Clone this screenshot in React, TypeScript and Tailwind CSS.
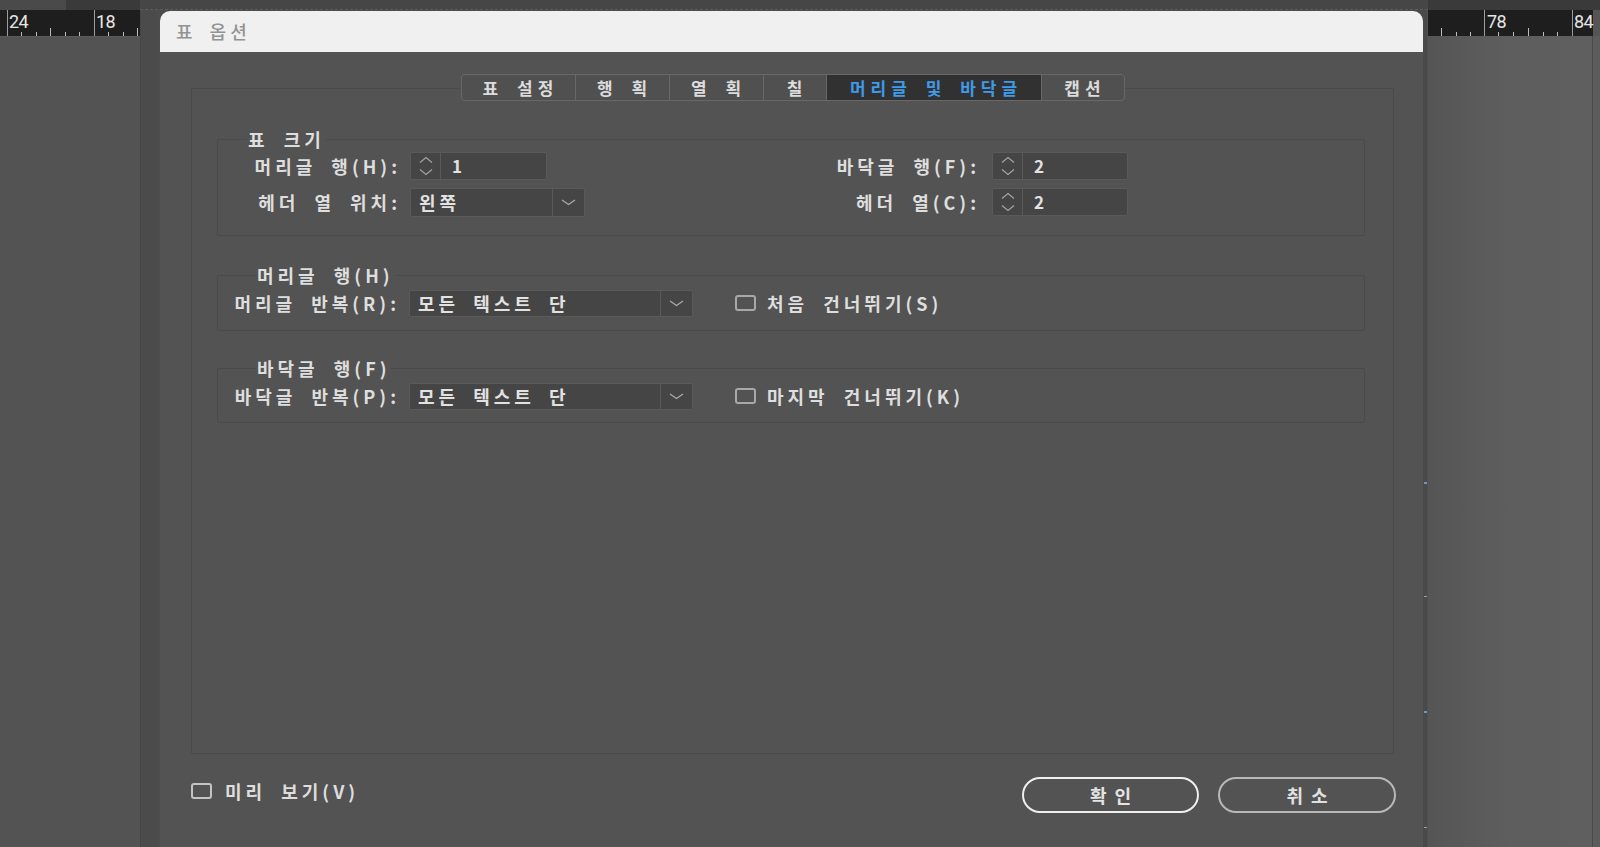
import React from "react";

function SpinArrows() {
  return (
    <svg width="14" height="20" viewBox="0 0 14 20" fill="none">
      <path d="M1 6.5 L7 1.5 L13 6.5" stroke="#a3a3a3" strokeWidth="1.2" />
      <path d="M1 13.5 L7 18.5 L13 13.5" stroke="#a3a3a3" strokeWidth="1.2" />
    </svg>
  );
}

function DropChevron() {
  return (
    <svg width="15" height="7" viewBox="0 0 15 7" fill="none">
      <path d="M1 1 L7.5 5.5 L14 1" stroke="#ababab" strokeWidth="1.2" />
    </svg>
  );
}

function Lbl({ children, className }: { children: React.ReactNode; className: string }) {
  return (
    <div className={"text-[18px] leading-[28px] font-semibold text-[#dedede] tracking-[4px] [word-spacing:7px] whitespace-nowrap " + className}>
      {children}
    </div>
  );
}

function Spinner({ value, w }: { value: string; w: string }) {
  return (
    <div className={"flex h-[28px] bg-[#454545] border border-[#5a5a5a] rounded-[2px] " + w}>
      <div className="w-[30px] flex items-center justify-center border-r border-[#5a5a5a]">
        <SpinArrows />
      </div>
      <div className="pl-[11px] text-[17px] leading-[26px] font-semibold text-[#e2e2e2]">{value}</div>
    </div>
  );
}

function Dropdown({ value, w, h }: { value: string; w: string; h: string }) {
  return (
    <div className={"flex bg-[#454545] border border-[#5a5a5a] rounded-[2px] " + w + " " + h}>
      <div className="flex-1 pl-[8px] flex items-center text-[18px] font-semibold text-[#e2e2e2] tracking-[4px] [word-spacing:6px] whitespace-nowrap">
        {value}
      </div>
      <div className="w-[32px] flex items-center justify-center border-l border-[#5a5a5a]">
        <DropChevron />
      </div>
    </div>
  );
}

function Check({ tone }: { tone: string }) {
  return <div className={"w-[21px] h-[16px] border-2 rounded-[3px] " + tone} />;
}

function Ruler({ ticks, majors, labels, width }: { ticks: { x: number; tall: boolean }[]; majors: number[]; labels: { x: number; t: string }[]; width: string }) {
  return (
    <div className={"relative h-[26px] bg-[#1e1e1e] " + width}>
      <svg className="absolute inset-0" width="100%" height="26">
        {majors.map((x) => (
          <line key={"m" + x} x1={x + 0.5} y1="0" x2={x + 0.5} y2="26" stroke="#9d9d9d" strokeWidth="1" />
        ))}
        {ticks.map((t) => (
          <line key={"t" + t.x} x1={t.x + 0.5} y1={t.tall ? 18 : 22} x2={t.x + 0.5} y2="26" stroke="#bdbdbd" strokeWidth="1" />
        ))}
      </svg>
      {labels.map((l) => (
        <span key={l.t} className="absolute top-[1px] text-[18px] leading-[22px] text-[#e6e6e6] font-['Roboto',sans-serif] tracking-[-0.5px]" style={{ left: l.x }}>
          {l.t}
        </span>
      ))}
    </div>
  );
}

const tabs = [
  { label: "표 설정", w: "w-[113px]", active: false },
  { label: "행 획", w: "w-[94px]", active: false },
  { label: "열 획", w: "w-[94px]", active: false },
  { label: "칠", w: "w-[63px]", active: false },
  { label: "머리글 및 바닥글", w: "w-[215px]", active: true },
  { label: "캡션", w: "w-[83px]", active: false },
];

export default function App() {
  return (
    <div className="w-[1600px] h-[847px] overflow-hidden bg-[#535353] flex flex-col font-['Noto_Sans_CJK_KR','Noto_Sans',sans-serif]">
      {/* top strip */}
      <div className="h-[10px] flex shrink-0">
        <div className="w-[66px] bg-[#4a4a4a]" />
        <div className="w-[74px] bg-[#3a3a3a]" />
        <div className="w-[1288px] bg-[#464646] border-b border-dashed border-[#5c5c5c]" />
        <div className="flex-1 bg-[#3a3a3a]" />
      </div>

      <div className="flex flex-1 min-h-0">
        {/* left app column */}
        <div className="w-[140px] flex flex-col">
          <Ruler
            width="w-[140px]"
            majors={[7, 94]}
            ticks={[
              { x: 21, tall: false },
              { x: 36, tall: false },
              { x: 50, tall: true },
              { x: 65, tall: false },
              { x: 79, tall: false },
              { x: 108, tall: false },
              { x: 123, tall: false },
              { x: 137, tall: true },
            ]}
            labels={[
              { x: 9, t: "24" },
              { x: 96, t: "18" },
            ]}
          />
          <div className="flex-1 bg-[#535353] border-t border-[#5a5a5a]" />
        </div>

        {/* left frame */}
        <div className="w-[20px] bg-[#4b4b4b] border-l border-[#464646] border-r-2 border-r-[#4d4d4d]" />

        {/* dialog */}
        <div className="w-[1263px] pt-[1px] flex flex-col bg-[#4a4a4a]">
          <div className="h-[41px] shrink-0 bg-[#f0f0f0] rounded-t-[10px] flex items-center pl-[16px]">
            <span className="text-[18px] font-medium text-[#939393] tracking-[4px] [word-spacing:5px]">표 옵션</span>
          </div>

          <div className="flex-1 bg-[#535353] pl-[31px] pr-[29px] pt-[22px] flex flex-col">
            {/* tabs */}
            <div className="relative z-10 self-center flex h-[27px] border border-[#686868] rounded-[4px] overflow-hidden bg-[#505050]">
              {tabs.map((t, i) => (
                <div
                  key={t.label}
                  className={
                    "flex items-center justify-center pl-[5px] text-[17px] font-semibold tracking-[5px] [word-spacing:5px] whitespace-nowrap " +
                    t.w +
                    (i > 0 ? " border-l border-[#686868]" : "") +
                    (t.active ? " bg-[#313131] text-[#3f9ae8]" : " text-[#dcdcdc]")
                  }
                >
                  {t.label}
                </div>
              ))}
            </div>

            {/* panel */}
            <div className="-mt-[13px] h-[666px] border border-[#4a4a4a] pt-[40px] pl-[25px] pr-[28px] flex flex-col">
              {/* group 1 */}
              <fieldset className="border border-[#4a4a4a] rounded-[2px] pt-[3px] pb-[19px]">
                <legend className="ml-[29px] px-[1px] text-[18px] leading-[20px] font-semibold text-[#dedede] tracking-[4px] [word-spacing:7px]">
                  표 크기
                </legend>
                <div className="flex flex-col gap-[8px]">
                  <div className="flex items-center h-[28px]">
                    <Lbl className="w-[183px] text-right">머리글 행(H):</Lbl>
                    <div className="w-[180px] ml-[9px]">
                      <Spinner value="1" w="w-[137px]" />
                    </div>
                    <Lbl className="w-[390px] text-right">바닥글 행(F):</Lbl>
                    <div className="ml-[12px]">
                      <Spinner value="2" w="w-[136px]" />
                    </div>
                  </div>
                  <div className="flex items-center h-[28px]">
                    <Lbl className="w-[183px] text-right">헤더 열 위치:</Lbl>
                    <div className="w-[180px] ml-[9px]">
                      <Dropdown value="왼쪽" w="w-[175px]" h="h-[29px]" />
                    </div>
                    <Lbl className="w-[390px] text-right">헤더 열(C):</Lbl>
                    <div className="ml-[12px]">
                      <Spinner value="2" w="w-[136px]" />
                    </div>
                  </div>
                </div>
              </fieldset>

              {/* group 2 */}
              <fieldset className="mt-[29px] border border-[#4a4a4a] rounded-[2px] pt-[4px] pb-[13px]">
                <legend className="ml-[38px] px-[1px] text-[18px] leading-[20px] font-semibold text-[#dedede] tracking-[4px] [word-spacing:7px]">
                  머리글 행(H)
                </legend>
                <div className="flex items-center">
                  <Lbl className="w-[182px] text-right">머리글 반복(R):</Lbl>
                  <div className="ml-[9px]">
                    <Dropdown value="모든 텍스트 단" w="w-[284px]" h="h-[27px]" />
                  </div>
                  <div className="ml-[42px]">
                    <Check tone="border-[#a8a8a8]" />
                  </div>
                  <Lbl className="ml-[11px]">처음 건너뛰기(S)</Lbl>
                </div>
              </fieldset>

              {/* group 3 */}
              <fieldset className="mt-[27px] border border-[#4a4a4a] rounded-[2px] pt-[4px] pb-[12px]">
                <legend className="ml-[38px] px-[1px] text-[18px] leading-[20px] font-semibold text-[#dedede] tracking-[4px] [word-spacing:7px]">
                  바닥글 행(F)
                </legend>
                <div className="flex items-center">
                  <Lbl className="w-[182px] text-right">바닥글 반복(P):</Lbl>
                  <div className="ml-[9px]">
                    <Dropdown value="모든 텍스트 단" w="w-[284px]" h="h-[27px]" />
                  </div>
                  <div className="ml-[42px]">
                    <Check tone="border-[#a8a8a8]" />
                  </div>
                  <Lbl className="ml-[11px]">마지막 건너뛰기(K)</Lbl>
                </div>
              </fieldset>
            </div>

            {/* bottom row */}
            <div className="mt-[23px] flex items-start -mr-[2px]">
              <div className="flex items-center">
                <Check tone="border-[#c4c4c4]" />
                <Lbl className="ml-[13px]">미리 보기(V)</Lbl>
              </div>
              <div className="ml-auto flex gap-[19px]">
                <button className="w-[177px] h-[36px] rounded-full border-[2.5px] border-[#efefef] text-[18px] font-semibold text-[#e4e4e4] tracking-[8px] pl-[8px]">
                  확인
                </button>
                <button className="w-[178px] h-[36px] rounded-full border-2 border-[#b8b8b8] text-[18px] font-semibold text-[#e0e0e0] tracking-[8px] pl-[8px]">
                  취소
                </button>
              </div>
            </div>
          </div>
        </div>

        {/* right frame */}
        <div className="relative w-[5px] bg-[#4a4a4a] border-r border-[#4f4f4f]">
          <div className="absolute left-[1px] top-[472px] w-[3px] h-[2px] bg-[#6f93cc]" />
          <div className="absolute left-[1px] top-[586px] w-[3px] h-[1px] bg-[#a0a0a0]" />
          <div className="absolute left-[1px] top-[701px] w-[3px] h-[2px] bg-[#6f93cc]" />
          <div className="absolute left-[1px] top-[817px] w-[3px] h-[1px] bg-[#a0a0a0]" />
        </div>

        {/* right app column */}
        <div className="flex-1 flex flex-col">
          <div className="flex">
            <Ruler
              width="w-[165px]"
              majors={[56, 144]}
              ticks={[
                { x: 13, tall: true },
                { x: 28, tall: false },
                { x: 42, tall: false },
                { x: 70, tall: false },
                { x: 85, tall: false },
                { x: 100, tall: true },
                { x: 115, tall: false },
                { x: 129, tall: false },
              ]}
              labels={[
                { x: 59, t: "78" },
                { x: 146, t: "84" },
              ]}
            />
            <div className="flex-1 bg-[#555555]" />
          </div>
          <div className="flex-1 flex">
            <div className="w-[165px] bg-gradient-to-r from-[#555555] via-[#5e5e5e] to-[#5f5f5f] border-r border-[#4a4a4a]" />
            <div className="flex-1 bg-[#5c5c5c]" />
          </div>
        </div>
      </div>
    </div>
  );
}
